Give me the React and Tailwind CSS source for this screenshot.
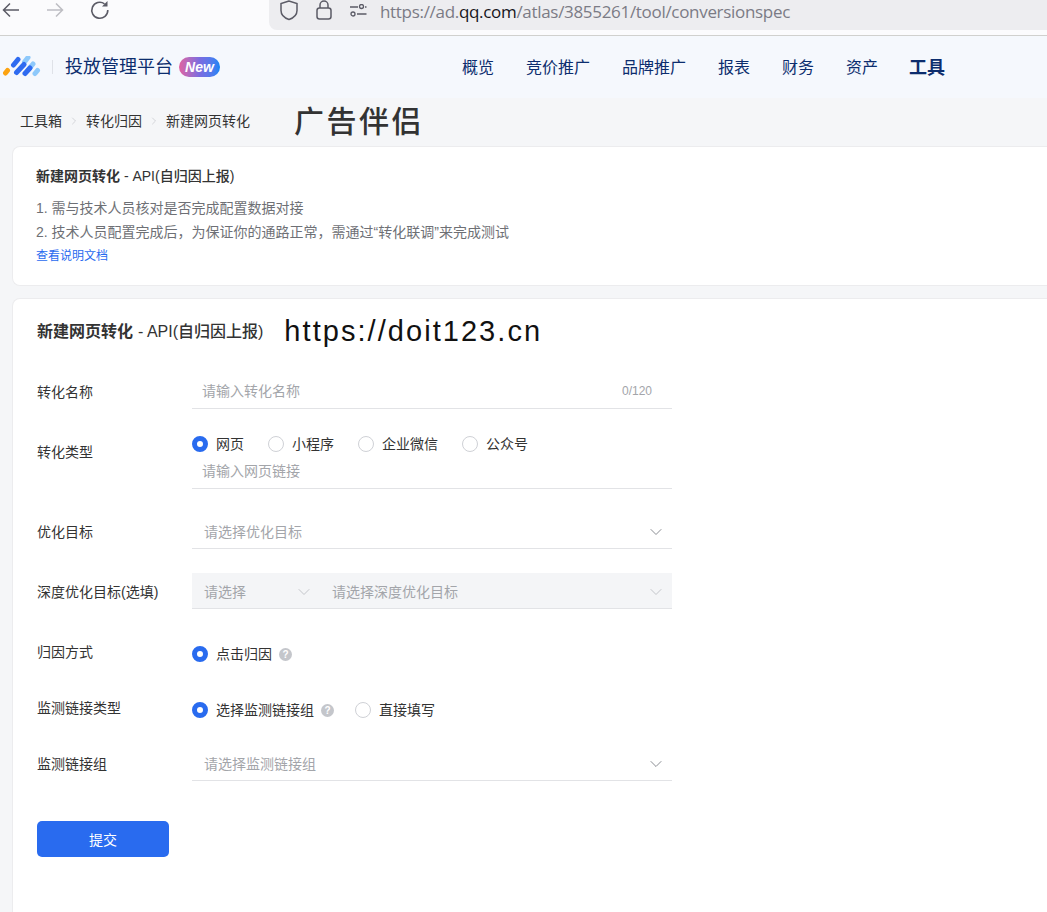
import { ChevronDown, ChevronRight } from "lucide-react";

const font = "font-['Liberation_Sans','Noto_Sans_CJK_SC',sans-serif]";

function Label({ children, className = "" }) {
  return <div className={`w-[155px] shrink-0 text-sm text-[#333] ${className}`}>{children}</div>;
}

function Radio({ checked, children, className = "" }) {
  return (
    <div className={`flex items-center text-sm text-[#333] ${className}`}>
      {checked ? (
        <span className="w-4 h-4 rounded-full border-[5px] border-[#296bef] bg-white mr-2 shrink-0" />
      ) : (
        <span className="w-4 h-4 rounded-full border border-[#cfd1d6] bg-white mr-2 shrink-0" />
      )}
      {children}
    </div>
  );
}

function Help() {
  return (
    <span className="ml-[7px] w-[13px] h-[13px] rounded-full bg-[#c4c6cb] text-white text-[10px] font-bold leading-[13px] text-center">
      ?
    </span>
  );
}

function Select({ placeholder }) {
  return (
    <div className="w-[480px] h-8 pb-[2px] border-b border-[#e2e3e6] pl-3 pr-[6px] flex items-center justify-between text-sm text-[#a3a5aa]">
      {placeholder}
      <ChevronDown size={20} strokeWidth={1.2} className="text-[#8a8d93]" />
    </div>
  );
}

export default function App() {
  return (
    <div className={`h-[912px] overflow-hidden bg-[#f5f6f8] ${font}`}>
      {/* browser bar */}
      <div className="h-9 bg-[#fbfbfd] border-b border-[#d0d0ce] flex relative">
        <div className="flex items-start">
          <svg width="20" height="20" viewBox="0 0 20 20" fill="none" stroke="#5b5b66" strokeWidth="1.5" className="ml-[1px]">
            <path d="M18 10H2.5M9 3.5 2.5 10 9 16.5" />
          </svg>
          <svg width="20" height="20" viewBox="0 0 20 20" fill="none" stroke="#bdbdc3" strokeWidth="1.5" className="ml-[24px]">
            <path d="M2 10h15.5M11 3.5l6.5 6.5-6.5 6.5" />
          </svg>
          <svg width="20" height="20" viewBox="0 0 20 20" fill="none" stroke="#5b5b66" strokeWidth="1.6" className="ml-[25px]">
            <path d="M14.5 3.800A8 8 0 1 0 17.800 10" />
            <path d="M17.500 1v5.500H12z" fill="#5b5b66" stroke="none" />
          </svg>
        </div>
        <div className="ml-[159px] mb-[5px] flex-1 bg-[#ededf0] rounded-bl-lg flex items-start">
          <svg width="20" height="22" viewBox="0 0 20 22" fill="none" stroke="#5b5b66" strokeWidth="1.5" className="ml-[10px]">
            <path d="M10 1 2 3.500v7c0 4.500 3.500 7.500 8 9 4.500-1.500 8-4.500 8-9v-7z" />
          </svg>
          <svg width="18" height="20" viewBox="0 0 18 20" fill="none" stroke="#5b5b66" strokeWidth="1.500" className="ml-[16px]">
            <rect x="2" y="8" width="14" height="11" rx="2.500" />
            <path d="M5 8V5a4 4 0 0 1 8 0v3" />
          </svg>
          <svg width="18" height="14" viewBox="0 0 18 14" fill="none" stroke="#5b5b66" strokeWidth="1.300" className="ml-[16px] mt-[4px]">
            <circle cx="12.500" cy="2.500" r="2" />
            <circle cx="4" cy="10" r="2" />
            <path d="M1 3h8M16 3h1.500M8 10h9.500" />
          </svg>
          <div className="ml-[13px] mt-[1px] text-[17px] leading-[22px] text-[#7b7b85] font-['Open_Sans',sans-serif] tracking-[-0.31px]">
            https://ad.<span className="text-[#15141a]">qq.com</span>/atlas/3855261/tool/conversionspec
          </div>
        </div>
      </div>

      {/* top nav */}
      <div className="h-[62px] bg-[#f5f8fd] flex items-center">
        <svg width="38" height="22" viewBox="0 0 38 22" className="ml-[3px] shrink-0">
          <g strokeLinecap="round" fill="none" strokeWidth="5">
            <path d="M21.500 6 25 1.500M25 14l5-6M32 17.500l2.500-3" stroke="#8ec9fb" />
            <path d="M2.500 17l2-2.500" stroke="#fca311" />
            <path d="M10.500 9 15 3.500M13.500 16.500l7.500-8M22 17.500l5-5.500" stroke="#2f6bf0" />
          </g>
        </svg>
        <div className="ml-[11px] w-px h-[14px] bg-[#dfe2e8]" />
        <div className="ml-3 text-lg text-[#0c2d6e] whitespace-nowrap">投放管理平台</div>
        <div className="ml-[6px] w-[41px] h-5 rounded-full bg-gradient-to-r from-[#e060a0] via-[#7a6be0] to-[#0a84f5] text-white text-sm font-bold italic leading-5 text-center">
          New
        </div>
        <nav className="ml-[242px] pt-[2px] flex items-center gap-8 text-base text-[#0c2d6e] whitespace-nowrap">
          <span>概览</span>
          <span>竞价推广</span>
          <span>品牌推广</span>
          <span>报表</span>
          <span>财务</span>
          <span>资产</span>
          <span className="-ml-px text-lg font-bold">工具</span>
        </nav>
      </div>

      {/* breadcrumb */}
      <div className="h-[48px] pl-5 pb-[2px] flex items-center text-sm text-[#333] bg-[#f5f6f8]">
        <span>工具箱</span>
        <ChevronRight size={12} strokeWidth={1.4} className="mx-[6px] text-[#c4c6cb]" />
        <span>转化归因</span>
        <ChevronRight size={12} strokeWidth={1.4} className="mx-[6px] text-[#c4c6cb]" />
        <span>新建网页转化</span>
        <span className="ml-[44px] mt-[2px] text-[30px] leading-none text-[#333] tracking-[2.500px] font-medium">广告伴侣</span>
      </div>

      {/* notice card */}
      <div className="ml-3 h-[140px] bg-white border border-r-0 border-[#ececee] rounded-l-lg pl-[23px] pt-[20px]">
        <div className="text-sm leading-[18px] text-[#333] font-medium">
          <span className="font-bold">新建网页转化</span> - API(自归因上报)
        </div>
        <div className="mt-[11px] text-sm leading-6 text-[#6e7075]">
          <div>1. 需与技术人员核对是否完成配置数据对接</div>
          <div>2. 技术人员配置完成后，为保证你的通路正常，需通过“转化联调”来完成测试</div>
        </div>
        <div className="text-xs leading-6 text-[#296bef]">查看说明文档</div>
      </div>

      {/* form card */}
      <div className="ml-3 mt-3 h-[640px] bg-white border border-r-0 border-[#ececee] rounded-l-lg pl-6">
        <div className="h-[66px] flex items-center text-[#333]">
          <span className="text-base font-bold">新建网页转化</span>
          <span className="text-base font-medium ml-[5px]">- API(自归因上报)</span>
          <span className="ml-[21px] text-[29px] text-[#111] tracking-[2.050px]">https://doit123.cn</span>
        </div>

        <div className="mt-[11px] flex items-center">
          <Label className="pb-[2px]">转化名称</Label>
          <div className="w-[480px] h-[33px] pb-[2px] border-b border-[#e2e3e6] pl-[10px] pr-5 flex items-center justify-between text-sm text-[#a3a5aa]">
            请输入转化名称
            <span className="text-xs">0/120</span>
          </div>
        </div>

        <div className="mt-6 flex items-start">
          <Label className="mt-[9px]">转化类型</Label>
          <div className="w-[480px] border-b border-[#e2e3e6]">
            <div className="h-[22px] flex items-center">
              <Radio checked className="mr-6">网页</Radio>
              <Radio className="mr-6">小程序</Radio>
              <Radio className="mr-6">企业微信</Radio>
              <Radio>公众号</Radio>
            </div>
            <div className="h-[33px] pl-[10px] text-sm leading-[32px] text-[#a3a5aa]">请输入网页链接</div>
          </div>
        </div>

        <div className="mt-7 flex items-center">
          <Label className="pb-[2px]">优化目标</Label>
          <Select placeholder="请选择优化目标" />
        </div>

        <div className="mt-[24px] flex items-center">
          <Label className="pt-[2px]">深度优化目标(选填)</Label>
          <div className="w-[480px] h-9 pt-[2px] bg-[#f4f5f7] border-b border-[#e2e3e6] pl-3 pr-[6px] flex items-center text-sm text-[#a3a5aa]">
            <span className="w-[90px]">请选择</span>
            <ChevronDown size={20} strokeWidth={1.2} className="text-[#c4c6cb]" />
            <span className="ml-[18px] flex-1">请选择深度优化目标</span>
            <ChevronDown size={20} strokeWidth={1.2} className="text-[#c4c6cb]" />
          </div>
        </div>

        <div className="mt-[33px] flex items-start h-5">
          <Label>归因方式</Label>
          <div className="flex items-center mt-[2px]">
            <Radio checked>点击归因</Radio>
            <Help />
          </div>
        </div>

        <div className="mt-9 flex items-start h-5">
          <Label>监测链接类型</Label>
          <div className="flex items-center mt-[2px]">
            <Radio checked>选择监测链接组</Radio>
            <Help />
            <Radio className="ml-[21px]">直接填写</Radio>
          </div>
        </div>

        <div className="mt-[31px] flex items-center">
          <Label className="pb-[2px]">监测链接组</Label>
          <Select placeholder="请选择监测链接组" />
        </div>

        <button className="mt-10 pt-px w-[132px] h-9 rounded-[5px] bg-[#296bef] text-white text-sm">提交</button>
      </div>
    </div>
  );
}
